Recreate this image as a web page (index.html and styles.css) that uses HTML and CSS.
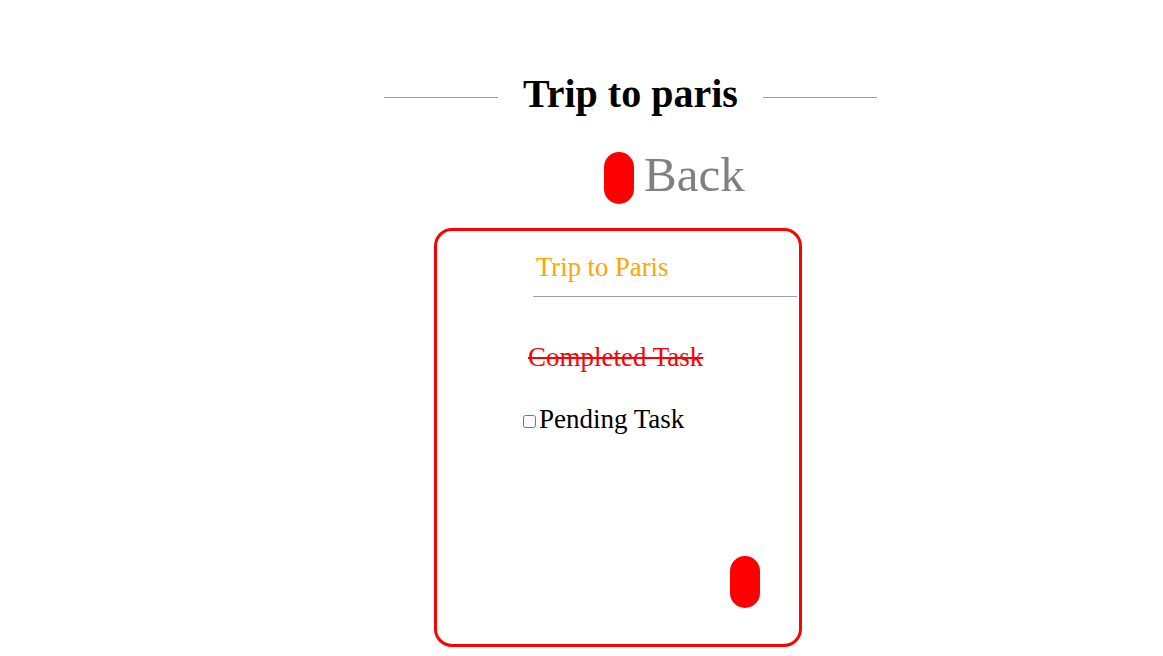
FILE: index.html
```html
<!DOCTYPE html>
<html>
<head>
<meta charset="utf-8">
<title>Trip to paris</title>
<link rel="stylesheet" href="styles.css">
</head>
<body>
<div class="page">
  <div class="title-row">
    <span class="rule"></span>
    <h1 class="title">Trip to paris</h1>
    <span class="rule"></span>
  </div>
  <div class="back-row">
    <button class="pill" type="button"></button>
    <span class="back-label">Back</span>
  </div>
  <div class="card">
    <input class="list-name" type="text" value="Trip to Paris">
    <ul class="tasks">
      <li class="task task-done">Completed Task</li>
      <li class="task task-pending"><input class="task-check" type="checkbox"><span>Pending Task</span></li>
    </ul>
    <button class="pill card-pill" type="button"></button>
  </div>
</div>
</body>
</html>
```

FILE: styles.css
```css
html, body {
  margin: 0;
  padding: 0;
  background: #ffffff;
}

body {
  font-family: "Liberation Serif", "Times New Roman", serif;
  color: #000000;
}

.page {
  display: flex;
  flex-direction: column;
  align-items: flex-start;
  padding-top: 71px;
}

.title-row {
  display: flex;
  align-items: center;
  column-gap: 25px;
  margin-left: 384px;
}

.rule {
  display: block;
  width: 114px;
  height: 1px;
  background: #a0a0a0;
  margin-top: 6px;
}

.title {
  margin: 0;
  font-size: 40px;
  line-height: 46px;
  font-weight: bold;
}

.back-row {
  display: flex;
  align-items: flex-start;
  column-gap: 10px;
  margin-left: 604px;
  margin-top: 30px;
}

.pill {
  display: block;
  width: 30px;
  height: 52px;
  padding: 0;
  border: none;
  border-radius: 15px;
  background: #ff0000;
}

.back-row .pill {
  margin-top: 5px;
}

.back-label {
  font-size: 49px;
  line-height: 55px;
  color: #808080;
}

.card {
  box-sizing: border-box;
  display: flex;
  flex-direction: column;
  align-items: flex-start;
  width: 368px;
  height: 419px;
  margin-left: 434px;
  margin-top: 24px;
  padding-top: 21px;
  border: 3px solid #ff0000;
  border-radius: 18px;
}

.list-name {
  box-sizing: content-box;
  width: 261px;
  height: 31px;
  margin: 0 0 0 96px;
  padding: 0 0 13px 3px;
  border: none;
  border-bottom: 1px solid #a0a0a0;
  outline: none;
  background: transparent;
  font-family: "Liberation Serif", "Times New Roman", serif;
  font-size: 26.67px;
  line-height: 31px;
  color: #ffa500;
}

.tasks {
  list-style: none;
  margin: 45px 0 0 0;
  padding: 0;
}

.task {
  font-size: 27px;
  line-height: 31px;
}

.task-done {
  padding-left: 91px;
  color: #ff0000;
  text-decoration: line-through;
}

.task-pending {
  display: flex;
  align-items: flex-start;
  margin-top: 31px;
  padding-left: 82px;
}

.task-check {
  width: 13px;
  height: 13px;
  margin: 11px 3px 0 4px;
}

.card-pill {
  align-self: flex-end;
  margin-top: auto;
  margin-right: 39px;
  margin-bottom: 36px;
}
```
